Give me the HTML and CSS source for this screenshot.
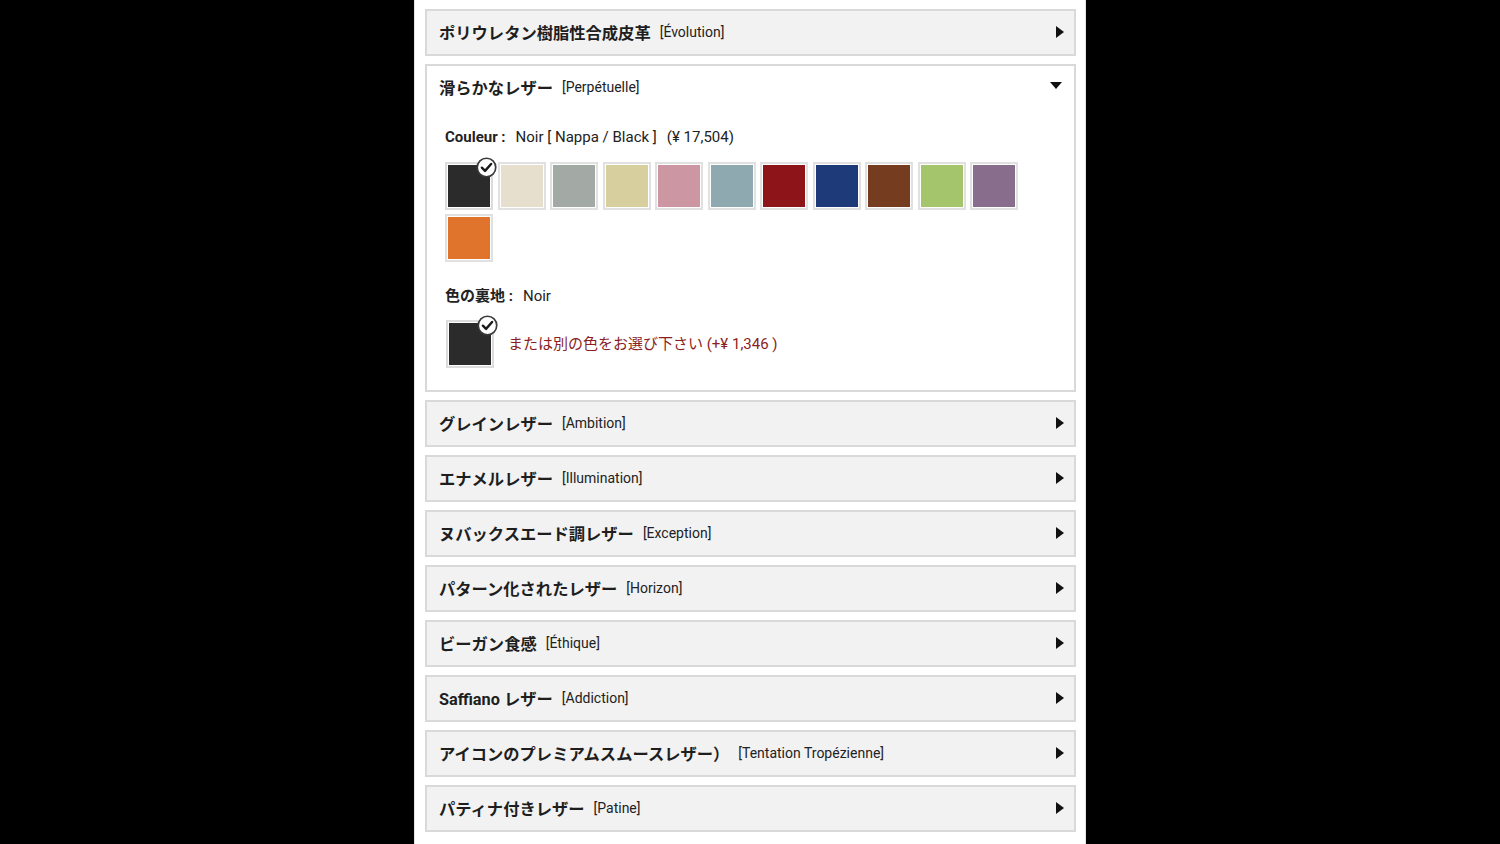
FILE: index.html
```html
<!DOCTYPE html>
<html lang="ja">
<head>
<meta charset="utf-8">
<title>Cuirs</title>
<link rel="stylesheet" href="styles.css">
</head>
<body>
<div class="page">
  <div class="acc">
    <div class="acc-head"><span class="t">ポリウレタン樹脂性合成皮革</span><span class="s">[Évolution]</span><span class="arrow-r"></span></div>
  </div>
  <div class="acc open">
    <div class="acc-head"><span class="t">滑らかなレザー</span><span class="s">[Perpétuelle]</span><span class="arrow-d"></span></div>
    <div class="acc-body">
      <div class="label"><b>Couleur :</b><span class="v">Noir [ Nappa / Black ]</span><span class="p">(¥ 17,504)</span></div>
      <div class="swatches">
        <div class="sw sel" style="--c:#2b2b2b"><svg class="chk" viewBox="0 0 20 20"><circle cx="10" cy="10" r="8.8" fill="#fff" stroke="#3a3a3a" stroke-width="1.6"/><path d="M5.6 10.2 L8.6 13.2 L14.4 6.6" fill="none" stroke="#1a1a1a" stroke-width="2.3" stroke-linecap="round" stroke-linejoin="round"/></svg></div>
        <div class="sw" style="--c:#e6dfce"></div>
        <div class="sw" style="--c:#a3aaa6"></div>
        <div class="sw" style="--c:#d8cf9f"></div>
        <div class="sw" style="--c:#cc97a3"></div>
        <div class="sw" style="--c:#8ea9b0"></div>
        <div class="sw" style="--c:#8d1519"></div>
        <div class="sw" style="--c:#1e3a78"></div>
        <div class="sw" style="--c:#763c20"></div>
        <div class="sw" style="--c:#a4c56c"></div>
        <div class="sw" style="--c:#896d8c"></div>
        <div class="sw" style="--c:#e0742c"></div>
      </div>
      <div class="label lining-label"><b>色の裏地 :</b><span class="v">Noir</span></div>
      <div class="lining">
        <div class="sw sel" style="--c:#2b2b2b"><svg class="chk" viewBox="0 0 20 20"><circle cx="10" cy="10" r="8.8" fill="#fff" stroke="#3a3a3a" stroke-width="1.6"/><path d="M5.6 10.2 L8.6 13.2 L14.4 6.6" fill="none" stroke="#1a1a1a" stroke-width="2.3" stroke-linecap="round" stroke-linejoin="round"/></svg></div>
        <span class="other">または別の色をお選び下さい (+¥ 1,346 )</span>
      </div>
    </div>
  </div>
  <div class="acc"><div class="acc-head"><span class="t">グレインレザー</span><span class="s">[Ambition]</span><span class="arrow-r"></span></div></div>
  <div class="acc"><div class="acc-head"><span class="t">エナメルレザー</span><span class="s">[Illumination]</span><span class="arrow-r"></span></div></div>
  <div class="acc"><div class="acc-head"><span class="t">ヌバックスエード調レザー</span><span class="s">[Exception]</span><span class="arrow-r"></span></div></div>
  <div class="acc"><div class="acc-head"><span class="t">パターン化されたレザー</span><span class="s">[Horizon]</span><span class="arrow-r"></span></div></div>
  <div class="acc"><div class="acc-head"><span class="t">ビーガン食感</span><span class="s">[Éthique]</span><span class="arrow-r"></span></div></div>
  <div class="acc"><div class="acc-head"><span class="t">Saffiano レザー</span><span class="s">[Addiction]</span><span class="arrow-r"></span></div></div>
  <div class="acc"><div class="acc-head"><span class="t">アイコンのプレミアムスムースレザー）</span><span class="s">[Tentation Tropézienne]</span><span class="arrow-r"></span></div></div>
  <div class="acc"><div class="acc-head"><span class="t">パティナ付きレザー</span><span class="s">[Patine]</span><span class="arrow-r"></span></div></div>
</div>
</body>
</html>
```

FILE: styles.css
```css
html, body {
  margin: 0;
  padding: 0;
  background: #000;
}
body {
  font-family: Roboto, "Noto Sans CJK JP", sans-serif;
  color: #222;
}
.page {
  width: 672px;
  height: 844px;
  margin: 0 auto;
  background: #fff;
  box-sizing: border-box;
  padding-top: 9px;
  border-left: 1px solid #e4e4e4;
  border-right: 1px solid #e4e4e4;
  overflow: hidden;
}
.acc {
  margin: 0 9px 8px 10px;
  border: 2px solid #d9d9d9;
  background: #f2f2f2;
}
.acc.open {
  background: #fff;
}
.acc-head {
  box-sizing: border-box;
  height: 43px;
  display: flex;
  align-items: center;
  padding: 0 10px 2px 12px;
}
.acc-head .t {
  font-size: 16.3px;
  font-weight: 700;
  color: #1e1e1e;
  white-space: nowrap;
}
.acc-head .s {
  font-size: 14px;
  color: #222;
  margin-left: 9px;
  white-space: nowrap;
}
.arrow-r {
  margin-left: auto;
  width: 0;
  height: 0;
  border-top: 6.5px solid transparent;
  border-bottom: 6.5px solid transparent;
  border-left: 8px solid #111;
}
.arrow-d {
  margin-left: auto;
  margin-right: 2px;
  margin-top: -2px;
  width: 0;
  height: 0;
  border-left: 6.5px solid transparent;
  border-right: 6.5px solid transparent;
  border-top: 7px solid #111;
}
.acc-body {
  padding: 18px 18px 22px 18px;
}
.label {
  font-size: 15px;
  line-height: 20px;
  height: 20px;
  display: flex;
  align-items: center;
  color: #222;
}
.label b {
  font-weight: 700;
}
.label .v {
  margin-left: 10px;
}
.label .p {
  margin-left: 10px;
}
.swatches {
  display: flex;
  flex-wrap: wrap;
  column-gap: 4.5px;
  row-gap: 4px;
  margin-top: 15px;
}
.sw {
  position: relative;
  width: 48px;
  height: 48px;
  box-sizing: border-box;
  border: 2px solid #e1e1e1;
  padding: 1px;
  background: var(--c);
  background-clip: content-box;
}
.sw.sel {
  border-color: #dcdcdc;
}
.chk {
  position: absolute;
  width: 21px;
  height: 21px;
  top: -7px;
  right: -6px;
}
.lining-label {
  margin-top: 24px;
}
.lining {
  display: flex;
  align-items: center;
  margin-top: 14px;
}
.lining .sw {
  margin-left: 1px;
}
.other {
  margin-left: 14px;
  margin-top: -3px;
  font-size: 15px;
  color: #8b1e22;
}
```
